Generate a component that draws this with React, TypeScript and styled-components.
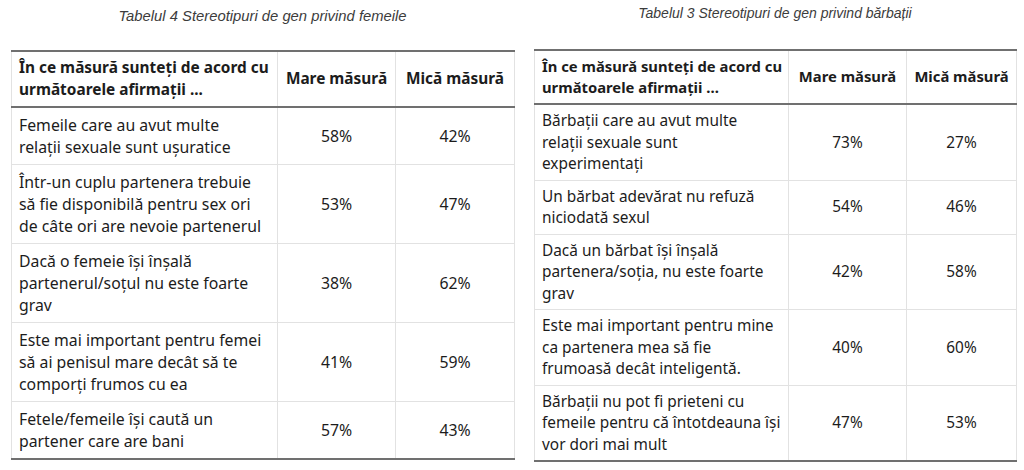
import React from "react";
import styled, { createGlobalStyle } from "styled-components";

const Global = createGlobalStyle`
  html, body { margin: 0; padding: 0; background: #ffffff; }
  body { width: 1024px; height: 470px; overflow: hidden; }
`;

const Page = styled.div`
  display: flex;
  align-items: flex-start;
  gap: 20px;
  padding-left: 11px;
  width: 1024px;
  box-sizing: border-box;
`;

const Block = styled.section<{ $w: number; $titleTop: number; $titleGap: number }>`
  width: ${(p) => p.$w}px;
  display: flex;
  flex-direction: column;
  align-items: stretch;
  padding-top: ${(p) => p.$titleTop}px;
  gap: ${(p) => p.$titleGap}px;
`;

const Caption = styled.div<{ $size: number }>`
  font-family: "Liberation Sans", Arial, sans-serif;
  font-style: italic;
  font-size: ${(p) => p.$size}px;
  line-height: 16px;
  color: #3c3c3c;
  text-align: center;
`;

const Table = styled.table<{ $size: number; $lh: number; $pad: number }>`
  width: 100%;
  table-layout: fixed;
  border-collapse: collapse;
  font-family: "Noto Sans", "Open Sans", sans-serif;
  font-size: ${(p) => p.$size}px;
  line-height: ${(p) => p.$lh}px;
  color: #1c1c1c;
  border-top: 2px solid #707070;
  border-bottom: 2px solid #707070;

  td, th {
    padding: ${(p) => p.$pad}px 7px;
    border: 1px solid #e2e2e2;
    vertical-align: middle;
  }
  tr:first-child th { border-top: 2px solid #707070; }
  tr:last-child td { border-bottom: 2px solid #707070; }
`;

const HeadRow = styled.tr`
  th { border-bottom: 2px solid #707070; }
`;

const HeadCell = styled.th<{ $center?: boolean; $size: number; $pad: number }>`
  font-weight: 700;
  font-size: ${(p) => p.$size}px;
  text-align: ${(p) => (p.$center ? "center" : "left")};
  white-space: nowrap;
  && {
    padding-top: ${(p) => p.$pad}px;
    padding-bottom: ${(p) => p.$pad}px;
  }
`;

const TextCell = styled.td`
  text-align: left;
`;

const NumCell = styled.td`
  text-align: center;
`;

const Line = styled.span`
  display: block;
  white-space: nowrap;
`;

type Row = { lines: string[]; a: string; b: string };

const leftRows: Row[] = [
  { lines: ["Femeile care au avut multe", "relații sexuale sunt ușuratice"], a: "58%", b: "42%" },
  {
    lines: ["Într-un cuplu partenera trebuie", "să fie disponibilă pentru sex ori", "de câte ori are nevoie partenerul"],
    a: "53%",
    b: "47%",
  },
  { lines: ["Dacă o femeie își înșală", "partenerul/soțul nu este foarte", "grav"], a: "38%", b: "62%" },
  {
    lines: ["Este mai important pentru femei", "să ai penisul mare decât să te", "comporți frumos cu ea"],
    a: "41%",
    b: "59%",
  },
  { lines: ["Fetele/femeile își caută un", "partener care are bani"], a: "57%", b: "43%" },
];

const rightRows: Row[] = [
  { lines: ["Bărbații care au avut multe", "relații sexuale sunt", "experimentați"], a: "73%", b: "27%" },
  { lines: ["Un bărbat adevărat nu refuză", "niciodată sexul"], a: "54%", b: "46%" },
  { lines: ["Dacă un bărbat își înșală", "partenera/soția, nu este foarte", "grav"], a: "42%", b: "58%" },
  {
    lines: ["Este mai important pentru mine", "ca partenera mea să fie", "frumoasă decât inteligentă."],
    a: "40%",
    b: "60%",
  },
  {
    lines: ["Bărbații nu pot fi prieteni cu", "femeile pentru că întotdeauna își", "vor dori mai mult"],
    a: "47%",
    b: "53%",
  },
];

type TableProps = {
  caption: string;
  captionSize: number;
  rows: Row[];
  width: number;
  cols: [number, number, number];
  size: number;
  headSize: number;
  headPad: number;
  lh: number;
  pad: number;
  titleTop: number;
  titleGap: number;
};

function StatTable({
  caption,
  captionSize,
  rows,
  width,
  cols,
  size,
  headSize,
  headPad,
  lh,
  pad,
  titleTop,
  titleGap,
}: TableProps) {
  return (
    <Block $w={width} $titleTop={titleTop} $titleGap={titleGap}>
      <Caption $size={captionSize}>{caption}</Caption>
      <Table $size={size} $lh={lh} $pad={pad}>
        <colgroup>
          {cols.map((c, i) => (
            <col key={i} style={{ width: c }} />
          ))}
        </colgroup>
        <thead>
          <HeadRow>
            <HeadCell $size={headSize} $pad={headPad}>
              <Line>În ce măsură sunteți de acord cu</Line>
              <Line>următoarele afirmații ...</Line>
            </HeadCell>
            <HeadCell $center $size={headSize} $pad={headPad}>
              Mare măsură
            </HeadCell>
            <HeadCell $center $size={headSize} $pad={headPad}>
              Mică măsură
            </HeadCell>
          </HeadRow>
        </thead>
        <tbody>
          {rows.map((r, i) => (
            <tr key={i}>
              <TextCell>
                {r.lines.map((l, j) => (
                  <Line key={j}>{l}</Line>
                ))}
              </TextCell>
              <NumCell>{r.a}</NumCell>
              <NumCell>{r.b}</NumCell>
            </tr>
          ))}
        </tbody>
      </Table>
    </Block>
  );
}

export default function App() {
  return (
    <>
      <Global />
      <Page>
        <StatTable
          caption="Tabelul 4 Stereotipuri de gen privind femeile"
          captionSize={14.8}
          rows={leftRows}
          width={503}
          cols={[266, 118, 119]}
          size={15.8}
          headSize={15.4}
          headPad={5}
          lh={22}
          pad={6}
          titleTop={8}
          titleGap={26}
        />
        <StatTable
          caption="Tabelul 3 Stereotipuri de gen privind bărbații"
          captionSize={14}
          rows={rightRows}
          width={482}
          cols={[254, 118, 110]}
          size={15.4}
          headSize={14.8}
          headPad={4.5}
          lh={21.5}
          pad={5}
          titleTop={5}
          titleGap={28}
        />
      </Page>
    </>
  );
}
